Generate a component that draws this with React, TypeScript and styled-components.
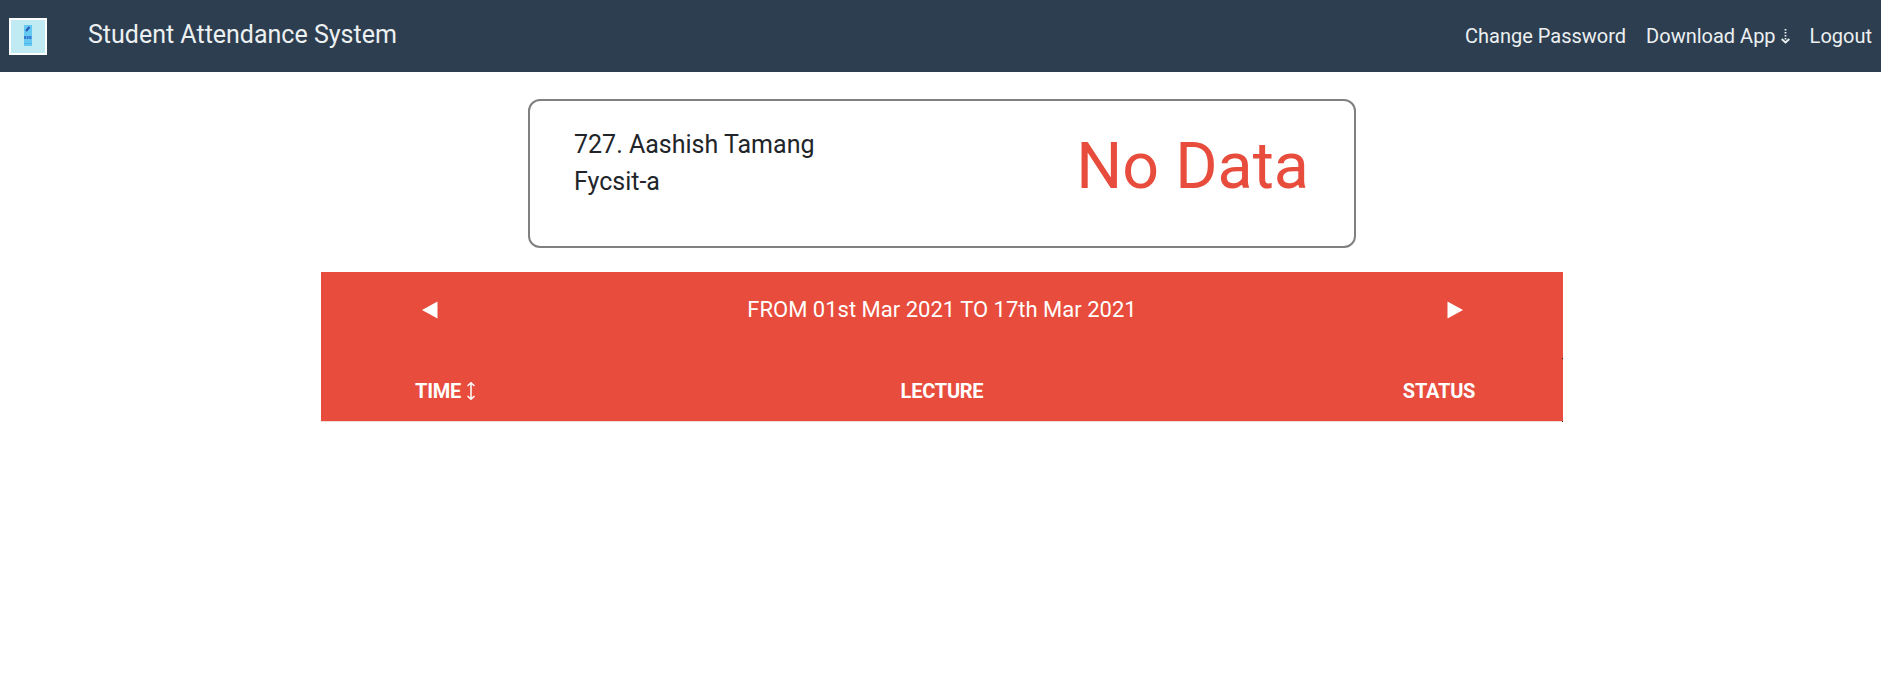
import React from 'react';
import styled, { createGlobalStyle } from 'styled-components';

const GlobalStyle = createGlobalStyle`
  * { box-sizing: border-box; }
  body { margin: 0; background: #fff; color: #212529; font-family: Roboto, "Liberation Sans", sans-serif; }
`;

const Navbar = styled.nav`
  display: flex;
  align-items: flex-start;
  height: 72px;
  padding: 18px 9px 0 9px;
  background: #2c3e50;
  color: #ecf0f1;
`;

const Logo = styled.svg`
  flex: none;
  width: 38px;
  height: 37px;
`;

const Brand = styled.span`
  margin: 2px auto 0 41px;
  font-size: 25px;
  line-height: 30px;
  white-space: nowrap;
`;

const NavLinks = styled.div`
  display: flex;
  gap: 20px;
  padding-top: 3px;
`;

const NavLink = styled.a`
  display: flex;
  align-items: center;
  gap: 5px;
  font-size: 20px;
  line-height: 30px;
  white-space: nowrap;
`;

const Card = styled.section`
  display: flex;
  justify-content: space-between;
  width: 828px;
  height: 149px;
  margin: 27px auto 0 528px;
  padding: 25px 45px 0 44px;
  border: 2px solid #808080;
  border-radius: 12px;
`;

const Student = styled.div`
  font-size: 25px;
  line-height: 37px;
`;

const Percentage = styled.div`
  padding-top: 1px;
  font-size: 64.6px;
  line-height: 78px;
  color: #e74c3c;
`;

const Table = styled.section`
  width: 1242px;
  margin: 24px auto 0 321px;
  background: #e74c3c;
  color: #fff;
  border-bottom: 1px solid #f3d8d5;
`;

const Row = styled.div<{ $height: number; $side: number; $heading?: boolean }>`
  position: relative;
  display: grid;
  grid-template-columns: ${(p) => p.$side}px 1fr ${(p) => p.$side}px;
  justify-items: center;
  align-items: start;
  height: ${(p) => p.$height}px;
  padding-top: ${(p) => (p.$heading ? 18 : 23)}px;
  font-size: ${(p) => (p.$heading ? 20 : 22)}px;
  font-weight: ${(p) => (p.$heading ? 700 : 400)};
  letter-spacing: ${(p) => (p.$heading ? '-0.25px' : 'normal')};
  line-height: 30px;

  &::after {
    content: '';
    position: absolute;
    right: 0;
    bottom: -1px;
    width: 1px;
    height: 1px;
    background: #212529;
  }
`;

const Cell = styled.div`
  display: flex;
  align-items: center;
  gap: 6px;
  height: 30px;
  white-space: nowrap;
`;

const Triangle = ({ flip = false }: { flip?: boolean }) => (
  <svg width="16" height="18" viewBox="0 0 16 18">
    <path d={flip ? 'M0.5 .5 16 9 .5 17.5z' : 'M15.5 .5 0 9l15.5 8.5z'} fill="#fff" />
  </svg>
);

export default function App() {
  return (
    <>
      <GlobalStyle />
      <Navbar>
        <Logo viewBox="0 0 38 37">
          <rect width="38" height="37" fill="#fff" />
          <rect x="2" y="2" width="34" height="33" fill="#c0ebf2" />
          <rect x="15" y="7" width="8" height="21" fill="#65c8f2" />
          <path d="M17 13 20.5 9" stroke="#2857b8" strokeWidth="2" />
          <path d="M15 19.5h8" stroke="#3478cf" strokeWidth="3" strokeDasharray="2 .6" />
          <path d="M15 25.5h8" stroke="#54b7ec" />
        </Logo>
        <Brand>Student Attendance System</Brand>
        <NavLinks>
          <NavLink>Change Password</NavLink>
          <NavLink>
            Download App
            <svg width="9" height="16" viewBox="0 0 9 16" fill="none" stroke="#ecf0f1">
              <path d="M4.5 1v14" strokeWidth="1.8" strokeDasharray="1.5 1.5" />
              <path d="M.7 11 4.5 14.5 8.3 11" strokeWidth="1.8" />
            </svg>
          </NavLink>
          <NavLink>Logout</NavLink>
        </NavLinks>
      </Navbar>
      <Card>
        <Student>
          <div>727. Aashish Tamang</div>
          <div>Fycsit-a</div>
        </Student>
        <Percentage>No Data</Percentage>
      </Card>
      <Table>
        <Row $height={86} $side={217}>
          <Cell><Triangle /></Cell>
          <Cell>FROM 01st Mar 2021 TO 17th Mar 2021</Cell>
          <Cell><Triangle flip /></Cell>
        </Row>
        <Row $height={63} $side={248} $heading>
          <Cell>
            TIME
            <svg width="8" height="18" viewBox="0 0 8 18" fill="none" stroke="#fff">
              <path d="M4 1v16M.5 4 4 .8 7.5 4M.5 14 4 17.2 7.5 14" strokeWidth="1.5" />
            </svg>
          </Cell>
          <Cell>LECTURE</Cell>
          <Cell>STATUS</Cell>
        </Row>
      </Table>
    </>
  );
}
